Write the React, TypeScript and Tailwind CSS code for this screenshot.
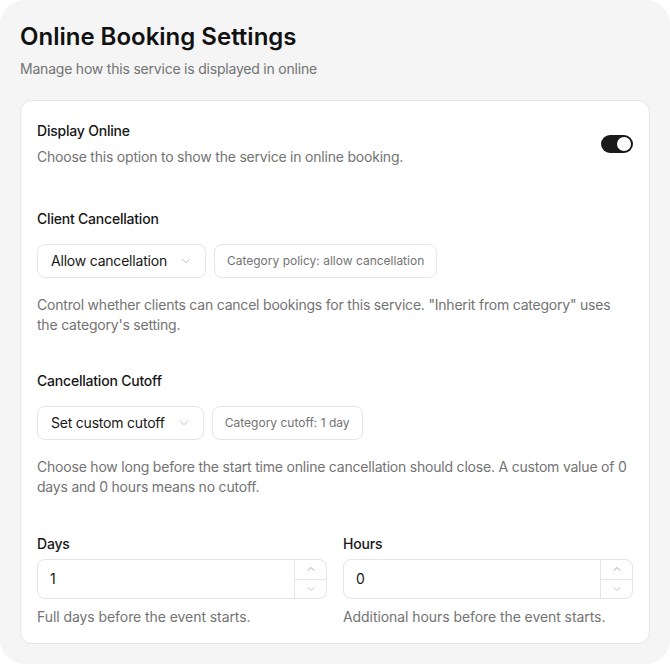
import React, { useState } from 'react';
import { ChevronDown, ChevronUp } from 'lucide-react';

const SelectBox: React.FC<{ value: string }> = ({ value }) => (
  <button className="flex h-[34px] items-center gap-3 rounded-lg border border-[#e5e5e5] bg-white pl-[13px] pr-3 text-sm text-[#171717]">
    <span>{value}</span>
    <ChevronDown className="h-3.5 w-3.5 text-[#b5b5b5]" strokeWidth={1.5} />
  </button>
);

const Badge: React.FC<{ text: string }> = ({ text }) => (
  <div className="flex h-[34px] items-center rounded-lg border border-[#e5e5e5] bg-white px-3 text-xs tracking-normal text-[#737373]">
    {text}
  </div>
);

const NumberField: React.FC<{ label: string; value: string; help: string }> = ({ label, value, help }) => (
  <div className="flex flex-1 flex-col">
    <div className="text-sm font-medium leading-5 text-[#171717]">{label}</div>
    <div className="mt-[5px] flex h-10 items-stretch rounded-lg border border-[#e5e5e5] bg-white">
      <div className="flex flex-1 items-center pl-3 text-sm text-[#171717]">{value}</div>
      <div className="flex w-8 flex-col border-l border-[#e5e5e5]">
        <div className="flex flex-1 items-center justify-center border-b border-[#e5e5e5]">
          <ChevronUp className="h-3 w-3 text-[#8a8a8a]" strokeWidth={1.5} />
        </div>
        <div className="flex flex-1 items-center justify-center">
          <ChevronDown className="h-3 w-3 text-[#b5b5b5]" strokeWidth={1.5} />
        </div>
      </div>
    </div>
    <p className="mt-2 text-sm leading-5 tracking-[-0.005em] text-[#737373]">{help}</p>
  </div>
);

const App: React.FC = () => {
  const [online, setOnline] = useState(true);

  return (
    <div className="h-[664px] w-[670px] bg-white font-['Inter',sans-serif] tracking-[-0.013em]">
      <div className="h-full rounded-3xl bg-[#f5f5f5] px-5 pt-[21px]">
        <h1 className="text-2xl font-semibold leading-8 tracking-normal text-[#111111]">Online Booking Settings</h1>
        <p className="mt-[6px] text-sm leading-5 text-[#737373]">Manage how this service is displayed in online</p>

        <div className="mt-[21px] rounded-xl border border-[#e5e5e5] bg-white px-4 pb-4 pt-5">
          {/* display online */}
          <div className="flex items-center justify-between">
            <div>
              <div className="text-sm font-medium leading-5 text-[#171717]">Display Online</div>
              <p className="mt-[6px] text-sm leading-5 text-[#737373]">Choose this option to show the service in online booking.</p>
            </div>
            <button
              onClick={() => setOnline(!online)}
              className={`flex h-[18px] w-8 items-center rounded-full p-[2px] ${online ? 'justify-end bg-[#1a1a1a]' : 'justify-start bg-[#d4d4d4]'}`}
            >
              <span className="h-[14px] w-[14px] rounded-full bg-white" />
            </button>
          </div>

          {/* client cancellation */}
          <div className="mt-[42px] text-sm font-medium leading-5 text-[#171717]">Client Cancellation</div>
          <div className="mt-[15px] flex gap-2">
            <SelectBox value="Allow cancellation" />
            <Badge text="Category policy: allow cancellation" />
          </div>
          <p className="mt-[17px] text-sm leading-5 text-[#737373]">
            Control whether clients can cancel bookings for this service. "Inherit from category" uses the category's setting.
          </p>

          {/* cutoff */}
          <div className="mt-[36px] text-sm font-medium leading-5 text-[#171717]">Cancellation Cutoff</div>
          <div className="mt-[15px] flex gap-2">
            <SelectBox value="Set custom cutoff" />
            <Badge text="Category cutoff: 1 day" />
          </div>
          <p className="mt-[17px] text-sm leading-5 text-[#737373]">
            Choose how long before the start time online cancellation should close. A custom value of 0 days and 0 hours means no cutoff.
          </p>

          <div className="mt-[37px] flex gap-4">
            <NumberField label="Days" value="1" help="Full days before the event starts." />
            <NumberField label="Hours" value="0" help="Additional hours before the event starts." />
          </div>
        </div>
      </div>
    </div>
  );
};

export default App;
